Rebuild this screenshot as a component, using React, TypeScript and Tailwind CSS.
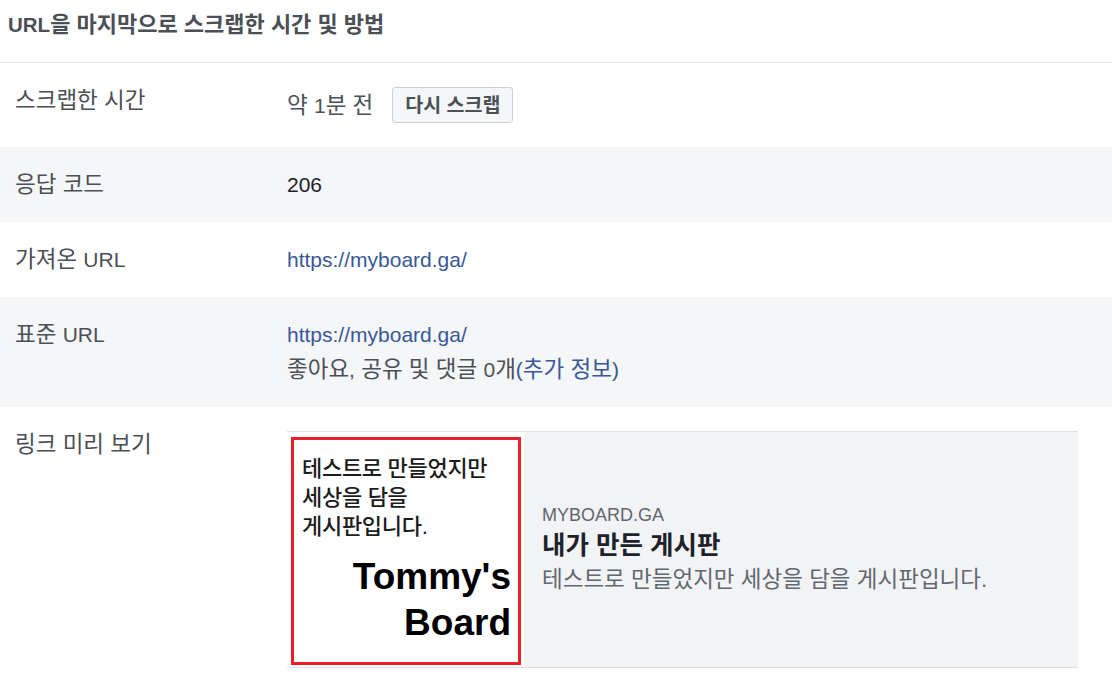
const font = { fontFamily: '"Liberation Sans", "Noto Sans CJK KR", sans-serif' };

// Latin bits keep 21px while Hangul runs at a slightly larger size
function L({ children }: { children: React.ReactNode }) {
  return <span className="text-[21px]">{children}</span>;
}

function Row({
  label,
  gray,
  children,
}: {
  label: React.ReactNode;
  gray?: boolean;
  children: React.ReactNode;
}) {
  return (
    <div className={`flex px-[15px] py-6 ${gray ? 'bg-[#f5f6f7]' : 'bg-white'}`}>
      <div className="w-[272px] shrink-0 text-[22.5px] leading-[27px] text-[#4b4f56]">
        {label}
      </div>
      <div className="flex-1 text-[22.5px] leading-[27px]">{children}</div>
    </div>
  );
}

export default function App() {
  return (
    <div className="w-[1112px] h-[680px] overflow-hidden bg-white" style={font}>
      <div className="h-[63px] px-2 pt-[12px] border-b border-[#e5e5e5]">
        <h2 className="text-[22px] leading-[26px] font-bold text-[#4b4f56]">
          <span className="text-[20.5px]">URL</span>을 마지막으로 스크랩한 시간 및 방법
        </h2>
      </div>

      <Row label="스크랩한 시간">
        <div className="flex items-center h-[36px]">
          <span className="text-[#4b4f56]">
            약 <L>1</L>분 전
          </span>
          <button className="ml-[19px] h-[36px] px-[12px] bg-[#f5f6f7] border border-[#ccd0d5] rounded-[3px] text-[19.5px] font-bold text-[#4b4f56]">
            다시 스크랩
          </button>
        </div>
      </Row>

      <Row label="응답 코드" gray>
        <span className="text-[21px] text-[#1d2129]">206</span>
      </Row>

      <Row
        label={
          <>
            가져온 <L>URL</L>
          </>
        }
      >
        <a className="text-[21px] text-[#385898]">https://myboard.ga/</a>
      </Row>

      <Row
        label={
          <>
            표준 <L>URL</L>
          </>
        }
        gray
      >
        <div className="text-[21px] text-[#385898]">https://myboard.ga/</div>
        <div className="mt-[8px] text-[#4b4f56]">
          좋아요<L>,</L> 공유 및 댓글 <L>0</L>개
          <span className="text-[#385898]">
            <L>(</L>추가 정보<L>)</L>
          </span>
        </div>
      </Row>

      <Row label="링크 미리 보기">
        <div className="flex w-[791px] border-y border-[#dddfe2] bg-[#f2f3f5]">
          <div className="w-[237px] h-[235px] shrink-0 bg-white pl-[4px] pt-[5px] pr-[3px] pb-[2px]">
            <div className="h-full border-[3px] border-[#e8202a] flex flex-col pl-[8px] pr-[7px] pt-[14px]">
              <div className="text-[22px] leading-[29px] font-medium text-[#1c1c1c] tracking-[-0.3px]">
                테스트로 만들었지만
                <br />
                세상을 담을
                <br />
                게시판입니다.
              </div>
              <div className="mt-[13px] text-right text-[37px] leading-[46px] font-bold text-black">
                Tommy's
                <br />
                Board
              </div>
            </div>
          </div>
          <div className="flex-1 flex flex-col justify-center pl-[18px] pr-4">
            <div className="text-[18px] leading-[22px] text-[#606770] uppercase">
              myboard.ga
            </div>
            <div className="text-[25.5px] leading-[38px] font-bold text-[#1d2129]">
              내가 만든 게시판
            </div>
            <div className="text-[22.5px] leading-[32px] text-[#606770]">
              테스트로 만들었지만 세상을 담을 게시판입니다.
            </div>
          </div>
        </div>
      </Row>
    </div>
  );
}
